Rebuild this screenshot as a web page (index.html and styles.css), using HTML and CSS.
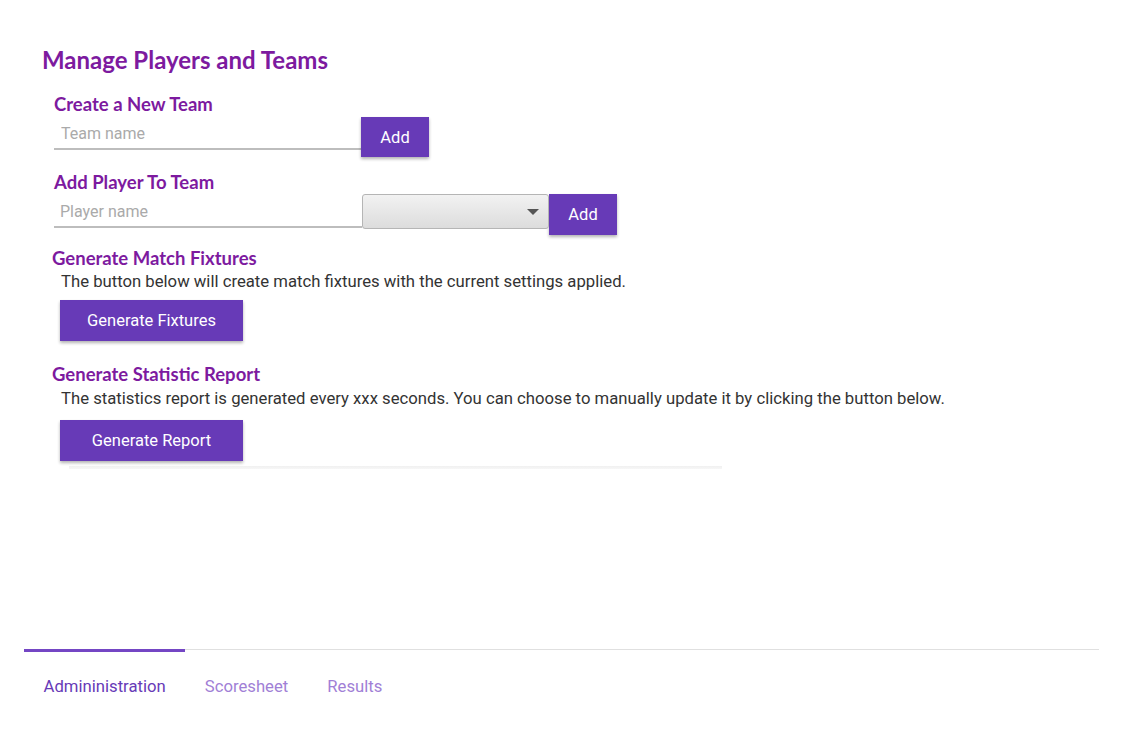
FILE: index.html
```html
<!DOCTYPE html>
<html>
<head>
<meta charset="utf-8">
<link rel="stylesheet" href="styles.css">
</head>
<body>
<div class="app">
  <main class="main">
    <h1 class="title">Manage Players and Teams</h1>

    <section class="block block-form">
      <h2 class="subtitle">Create a New Team</h2>
      <div class="row">
        <input class="text-input" type="text" placeholder="Team name">
        <button class="btn btn-small">Add</button>
      </div>
    </section>

    <section class="block block-form block-gap">
      <h2 class="subtitle">Add Player To Team</h2>
      <div class="row">
        <input class="text-input text-input-2" type="text" placeholder="Player name">
        <div class="select">
          <span class="select-arrow"></span>
        </div>
        <button class="btn btn-small btn-tall">Add</button>
      </div>
    </section>

    <section class="block block-action block-gap2">
      <h2 class="subtitle">Generate Match Fixtures</h2>
      <p class="desc">The button below will create match fixtures with the current settings applied.</p>
      <button class="btn btn-wide">Generate Fixtures</button>
    </section>

    <section class="block block-action block-gap3">
      <h2 class="subtitle">Generate Statistic Report</h2>
      <p class="desc">The statistics report is generated every xxx seconds. You can choose to manually update it by clicking the button below.</p>
      <button class="btn btn-wide">Generate Report</button>
      <div class="fade-line"></div>
    </section>
  </main>

  <nav class="tabs">
    <div class="tab tab-active">Admininistration</div>
    <div class="tab">Scoresheet</div>
    <div class="tab">Results</div>
  </nav>
</div>
</body>
</html>
```

FILE: styles.css
```css
* { box-sizing: border-box; }

html, body {
  margin: 0;
  padding: 0;
  background: #ffffff;
}

body {
  font-family: Roboto, "Liberation Sans", sans-serif;
  color: #333;
}

.app {
  width: 1122px;
  height: 747px;
  display: flex;
  flex-direction: column;
}

.main {
  flex: 1;
  padding: 47px 0 0 42px;
}

.title {
  margin: 0;
  font-family: Lato, "Open Sans", sans-serif;
  font-weight: 700;
  font-size: 24px;
  line-height: 26px;
  color: #7d1a9f;
}

.subtitle {
  margin: 0;
  font-family: Lato, "Open Sans", sans-serif;
  font-weight: 700;
  font-size: 18.5px;
  line-height: 20px;
  color: #7d1a9f;
}

.block-form {
  padding-left: 12px;
  margin-top: 21px;
}

.block-gap { margin-top: 15px; }

.block-action { padding-left: 10px; }

.block-gap2 { margin-top: 13px; }
.block-gap3 { margin-top: 23px; }

.row {
  display: flex;
  align-items: flex-start;
  margin-top: 2px;
}

.text-input {
  width: 307px;
  height: 34px;
  border: none;
  border-bottom: 2px solid #bdbdbd;
  padding: 3px 0 0 7px;
  font-family: Roboto, "Liberation Sans", sans-serif;
  font-size: 16px;
  color: #333;
  outline: none;
  background: transparent;
}

.text-input::placeholder { color: #aaaaaa; }

.text-input-2 {
  width: 308px;
  padding-left: 6px;
}

.select {
  position: relative;
  width: 187px;
  height: 35px;
  border: 1px solid #b5b5b5;
  border-radius: 3px;
  background: linear-gradient(#f2f2f2, #dcdcdc);
}

.select-arrow {
  position: absolute;
  right: 9px;
  top: 14px;
  width: 0;
  height: 0;
  border-left: 6px solid transparent;
  border-right: 6px solid transparent;
  border-top: 6px solid #555;
}

.btn {
  border: none;
  background: #673ab7;
  color: #fff;
  font-family: Roboto, "Liberation Sans", sans-serif;
  font-size: 16px;
  box-shadow: 0 2px 3px rgba(0, 0, 0, 0.3);
  cursor: pointer;
  padding: 0;
}

.btn-small {
  width: 68px;
  height: 40px;
  margin-top: 1px;
  font-size: 16.5px;
}

.btn-tall { height: 41px; margin-top: 0; }

.desc {
  margin: 4px 0 0 9px;
  font-size: 16.7px;
  line-height: 19px;
  color: #333;
}

.btn-wide {
  display: block;
  width: 183px;
  height: 41px;
  margin: 9px 0 0 8px;
  font-size: 16.5px;
}

.block-gap3 .desc { margin-top: 5px; }
.block-gap3 .btn-wide { margin-top: 12px; }

.fade-line {
  width: 653px;
  height: 3px;
  margin: 5px 0 0 17px;
  background: linear-gradient(#f0f0f0, #f7f7f7);
}

.tabs {
  display: flex;
  margin: 0 23px 24px 24px;
  height: 74px;
  border-top: 1px solid #e0e0e0;
}

.tab {
  height: 72px;
  padding: 0 19.5px;
  display: flex;
  align-items: center;
  margin-top: -1px;
  padding-top: 0;
  font-size: 16.7px;
  color: #a17fd6;
  border-top: 3px solid transparent;
}

.tab-active {
  color: #673ab7;
  border-top-color: #7446c4;
}
```
